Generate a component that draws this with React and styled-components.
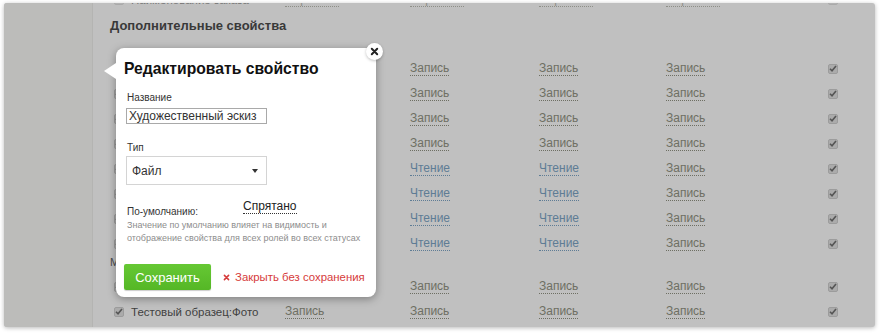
import React from 'react';
import styled, { createGlobalStyle } from 'styled-components';

const GlobalStyle = createGlobalStyle`
  body {
    margin: 0;
    background: #ffffff;
    font-family: "Liberation Sans", Arial, sans-serif;
  }
`;

const Page = styled.div`
  position: relative;
  width: 880px;
  height: 334px;
  padding: 3px 0 0 4px;
  box-sizing: border-box;
`;

const Card = styled.div`
  width: 871px;
  height: 324px;
  display: flex;
  overflow: hidden;
  border-radius: 3px;
  background: #c0c0c0;
  box-shadow: 0 1px 4px rgba(0, 0, 0, 0.28);
`;

const Sidebar = styled.div`
  width: 88px;
  flex-shrink: 0;
  background: #bcbcba;
  border-right: 1px solid #b4b4b2;
`;

const Main = styled.div`
  flex: 1;
  padding-left: 17px;
  display: flex;
  flex-direction: column;
`;

const Row = styled.div`
  display: grid;
  grid-template-columns: 175px 125px 129px 127px 162px 20px;
  align-items: center;
  height: 25px;
  flex-shrink: 0;
  margin-top: ${(p) => p.$offset || 0}px;
  opacity: ${(p) => (p.$faded ? 0.6 : 1)};
`;

const NameCell = styled.div`
  display: flex;
  align-items: center;
  gap: 7px;
  padding-left: 4px;
  font-size: 11.5px;
  color: #404040;
  white-space: nowrap;
`;

const Link = styled.span`
  justify-self: start;
  font-size: 12px;
  line-height: 14px;
  color: ${(p) => (p.$read ? '#5e7c95' : '#6e6f63')};
  border-bottom: 1px dotted ${(p) => (p.$read ? '#5e7c95' : '#6e6f63')};
`;

const Box = styled.span`
  width: 10px;
  height: 10px;
  box-sizing: border-box;
  border: 1px solid #9c9c9c;
  border-radius: 2px;
  background: #ababab;
  display: inline-flex;
  align-items: center;
  justify-content: center;
`;

const Heading = styled.div`
  font-size: 13px;
  font-weight: bold;
  color: #393939;
  height: 26px;
  line-height: 28px;
  margin-bottom: 18px;
  flex-shrink: 0;
`;

const GroupLabel = styled.div`
  font-size: 11px;
  color: #4a4a4a;
  height: 18px;
  line-height: 12px;
  flex-shrink: 0;
`;

const Popup = styled.div`
  position: absolute;
  left: 116px;
  top: 48px;
  width: 260px;
  height: 249px;
  box-sizing: border-box;
  padding: 11px 10px 0 10px;
  background: #ffffff;
  border-radius: 8px;
  box-shadow: 0 2px 8px rgba(0, 0, 0, 0.35);
  display: flex;
  flex-direction: column;

  &::before {
    content: '';
    position: absolute;
    left: -12px;
    top: 15px;
    border-style: solid;
    border-width: 8px 12px 8px 0;
    border-color: transparent #ffffff transparent transparent;
  }
`;

const Close = styled.span`
  position: absolute;
  right: -7px;
  top: -5px;
  width: 17px;
  height: 17px;
  border-radius: 50%;
  background: #ffffff;
  box-shadow: 0 1px 3px rgba(0, 0, 0, 0.25);
  display: flex;
  align-items: center;
  justify-content: center;
`;

const Title = styled.div`
  font-size: 15.7px;
  font-weight: bold;
  line-height: 20px;
  color: #111111;
  margin-left: -2px;
  white-space: nowrap;
`;

const FieldLabel = styled.div`
  font-size: 10px;
  line-height: 12px;
  color: #333333;
  padding-left: 1px;
  margin-top: ${(p) => p.$top}px;
`;

const TextInput = styled.input`
  width: 141px;
  height: 16px;
  box-sizing: border-box;
  margin: 4px 0 0 0;
  padding: 0 2px;
  border: 1px solid #a9a9a9;
  font-family: "Liberation Sans", Arial, sans-serif;
  font-size: 12px;
  color: #333333;
  outline: none;
`;

const Select = styled.div`
  width: 141px;
  height: 29px;
  box-sizing: border-box;
  margin-top: 2px;
  padding: 0 8px 0 5px;
  border: 1px solid #d4d4d4;
  display: flex;
  align-items: center;
  justify-content: space-between;
  font-size: 12px;
  color: #333333;
`;

const Caret = styled.span`
  width: 0;
  height: 0;
  border-style: solid;
  border-width: 4px 3px 0 3px;
  border-color: #333333 transparent transparent transparent;
`;

const DefaultRow = styled.div`
  display: flex;
  align-items: flex-end;
  height: 18px;
  margin-top: 15px;
  padding-left: 1px;
`;

const DefaultLabel = styled.span`
  width: 116px;
  font-size: 10px;
  line-height: 12px;
  color: #333333;
`;

const DefaultValue = styled.span`
  font-size: 12px;
  line-height: 13px;
  color: #222222;
  border-bottom: 1px dotted #333333;
  margin-bottom: 4px;
`;

const Hint = styled.div`
  font-size: 9px;
  line-height: 13px;
  color: #8d8d8d;
  padding-left: 1px;
  margin-top: 1px;
  white-space: nowrap;
`;

const Actions = styled.div`
  display: flex;
  align-items: center;
  gap: 12px;
  margin: 19px -10px 0 -2px;
`;

const SaveButton = styled.button`
  width: 87px;
  height: 26px;
  flex-shrink: 0;
  border: none;
  border-radius: 2px;
  background: linear-gradient(#66c834, #55b726);
  box-shadow: 0 1px 1px rgba(0, 0, 0, 0.2);
  color: #ffffff;
  font-family: "Liberation Sans", Arial, sans-serif;
  font-size: 13px;
  padding: 0;
`;

const Dismiss = styled.span`
  display: flex;
  align-items: center;
  gap: 5px;
  font-size: 11.4px;
  color: #d63a3a;
  white-space: nowrap;
`;

const Check = () => (
  <svg width="8" height="7" viewBox="0 0 8 7">
    <path d="M1 3.8 L3 5.8 L7 1" fill="none" stroke="#555" strokeWidth="1.6" />
  </svg>
);

const Checkbox = () => (
  <Box>
    <Check />
  </Box>
);

const Cross = ({ color, size }) => (
  <svg width={size} height={size} viewBox="0 0 10 10">
    <path d="M2 2 L8 8 M8 2 L2 8" stroke={color} strokeWidth="2.2" strokeLinecap="round" />
  </svg>
);

const rows = [
  ['Название', false],
  ['Описание', false],
  ['Автор', false],
  ['Дата', false],
  ['Статус', true],
  ['Создатель', true],
  ['Изменено', true],
  ['Версия', true],
];

const PropRow = ({ name, read }) => (
  <Row>
    <NameCell>
      <Checkbox />
      {name}
    </NameCell>
    <Link>Запись</Link>
    <Link $read={read}>{read ? 'Чтение' : 'Запись'}</Link>
    <Link $read={read}>{read ? 'Чтение' : 'Запись'}</Link>
    <Link>Запись</Link>
    <Checkbox />
  </Row>
);

const App = () => {
  return (
    <Page>
      <GlobalStyle />
      <Card>
        <Sidebar />
        <Main>
          <Row $offset={-16} $faded>
            <NameCell>
              <Checkbox />
              Наименование заказа
            </NameCell>
            <Link>Спрятано</Link>
            <Link>Спрятано</Link>
            <Link>Спрятано</Link>
            <Link>Спрятано</Link>
            <Checkbox />
          </Row>
          <Heading>Дополнительные свойства</Heading>
          {rows.map(([name, read]) => (
            <PropRow key={name} name={name} read={read} />
          ))}
          <GroupLabel>Медиа</GroupLabel>
          <PropRow name="Тестовый образец:Эскиз" />
          <PropRow name="Тестовый образец:Фото" />
        </Main>
      </Card>

      <Popup>
        <Close>
          <Cross color="#222" size={9} />
        </Close>
        <Title>Редактировать свойство</Title>
        <FieldLabel $top={13}>Название</FieldLabel>
        <TextInput defaultValue="Художественный эскиз" />
        <FieldLabel $top={18}>Тип</FieldLabel>
        <Select>
          Файл
          <Caret />
        </Select>
        <DefaultRow>
          <DefaultLabel>По-умолчанию:</DefaultLabel>
          <DefaultValue>Спрятано</DefaultValue>
        </DefaultRow>
        <Hint>
          Значение по умолчанию влияет на видимость и
          <br />
          отображение свойства для всех ролей во всех статусах
        </Hint>
        <Actions>
          <SaveButton>Сохранить</SaveButton>
          <Dismiss>
            <Cross color="#d63a3a" size={7} />
            Закрыть без сохранения
          </Dismiss>
        </Actions>
      </Popup>
    </Page>
  );
};

export default App;
